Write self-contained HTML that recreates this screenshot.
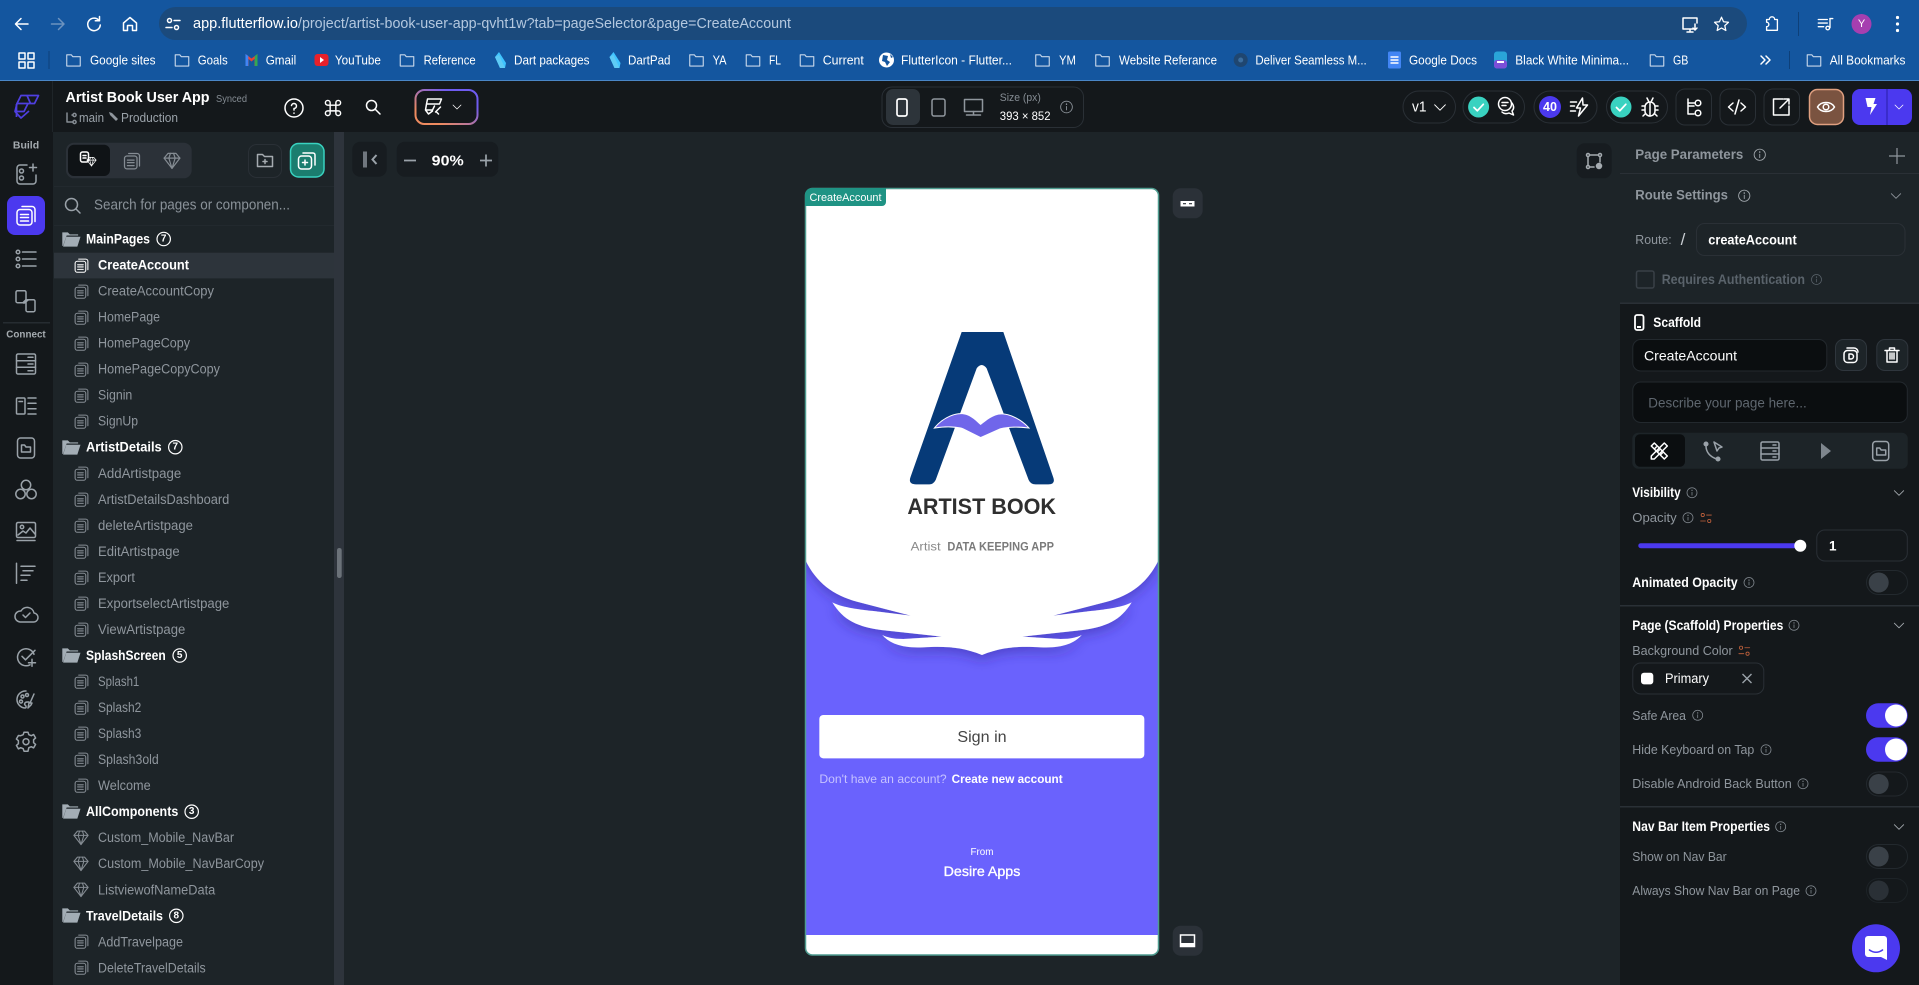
<!DOCTYPE html>
<html lang="en">
<head>
<meta charset="utf-8">
<title>Artist Book User App - FlutterFlow</title>
<style>
html,body{margin:0;padding:0;width:1919px;height:985px;overflow:hidden;background:#1d2428}
svg{display:block;font-family:"Liberation Sans",sans-serif}
text{dominant-baseline:central}
.bm{font-size:13px;fill:#fff}
.it{font-size:13.5px;fill:#8f969d}
.hd{font-size:13.5px;fill:#fff;font-weight:700}
.cn{font-size:10px;fill:#fff;font-weight:700;text-anchor:middle}
.lb{font-size:13px;fill:#8f969d}
.tt{font-size:13.5px;fill:#fff;font-weight:700}
.ic{fill:none;stroke:currentColor;stroke-width:1.5;stroke-linecap:round;stroke-linejoin:round}
.r{color:#9aa2a9}
.w{color:#fff}
.gy{color:#858c93}
.or{color:#c4623c}
</style>
</head>
<body>
<svg width="1919" height="985" viewBox="0 0 1919 985" xmlns="http://www.w3.org/2000/svg">
<defs>
<symbol id="p" viewBox="0 0 24 24"><g class="ic" stroke-width="1.9"><path d="M8 3h10a3 3 0 0 1 3 3v12"/><rect x="3" y="6" width="15" height="15.5" rx="3"/><path d="M6.500 11h8M6.500 14h8M6.500 17.500h8"/></g></symbol>
<symbol id="g" viewBox="0 0 24 24"><g class="ic" stroke-width="1.8"><path d="M7 3h10l5 6-10 13L2 9z"/><path d="M2 9h20M8 9l4 13 4-13M8 9l2-6M16 9l-2-6"/></g></symbol>
<symbol id="fo" viewBox="0 0 24 24"><path fill="#a3adb5" d="M1 3h7l2.500 2.500H21V7H6.500L2 20H1z"/><path fill="#a3adb5" d="M6 8.500h18L20 21H2z"/></symbol>
<symbol id="f" viewBox="0 0 24 24"><path class="ic" d="M3 5h6l2 2.500h10V20H3z"/></symbol>
<symbol id="i" viewBox="0 0 24 24"><g class="ic" stroke-width="1.800"><circle cx="12" cy="12" r="10"/><path d="M12 11v6"/><path d="M12 7v.4" stroke-width="2.400"/></g></symbol>
<symbol id="ch" viewBox="0 0 24 24"><path class="ic" stroke-width="2" d="M4 8l8 8 8-8"/></symbol>
<symbol id="tn" viewBox="0 0 24 24"><g class="ic" stroke-width="2.200"><circle cx="6" cy="6" r="3"/><path d="M13 6h9M2 17h9"/><circle cx="18" cy="17" r="3"/></g></symbol>
<clipPath id="phone"><rect x="806" y="189" width="352" height="765.500" rx="6"/></clipPath>
<filter id="sh" x="-10%" y="-10%" width="120%" height="125%"><feDropShadow dx="0" dy="15" stdDeviation="18" flood-color="#2e2890" flood-opacity=".45"/></filter>
<linearGradient id="gb" x1="0" y1="1" x2="1" y2="0"><stop offset=".2" stop-color="#ee8b60"/><stop offset=".75" stop-color="#6f5cf0"/></linearGradient>
</defs>

<!-- Chrome -->
<rect width="1919" height="81" fill="#14569f"/>
<rect y="80" width="1919" height="1" fill="#4a86c6"/>
<rect x="159" y="7" width="1588" height="33" rx="16.500" fill="#1b4a7c"/>
<g class="ic w" transform="translate(22,24)" stroke-width="1.700"><path d="M6 0H-6M-1-5.500L-6.500 0-1 5.500"/></g>
<g class="ic" style="color:#6d93bf" transform="translate(57.500,24)" stroke-width="1.700"><path d="M-6 0H6M1-5.500L6.500 0 1 5.500"/></g>
<g class="ic w" transform="translate(94,24)" stroke-width="1.700"><path d="M5-3.500A6.300 6.300 0 1 0 6.300 1"/><path d="M5.500-7.500v4.200H1.300"/></g>
<g class="ic w" transform="translate(130,24)" stroke-width="1.500"><path d="M-6.500-1L0-6.500 6.500-1v7.500H2.500V1.500h-5v5h-4z"/></g>
<g class="ic w" transform="translate(173,24)" stroke-width="1.400"><circle cx="-3.500" cy="-3.500" r="2"/><path d="M1-3.500h6M-7 3.500h6"/><circle cx="3.500" cy="3.500" r="2"/></g>
<text x="193" y="24" font-size="14.500" fill="#fff" textLength="105" lengthAdjust="spacingAndGlyphs">app.flutterflow.io</text>
<text x="298" y="24" font-size="14.500" fill="#b4c8df" textLength="493" lengthAdjust="spacingAndGlyphs">/project/artist-book-user-app-qvht1w?tab=pageSelector&amp;page=CreateAccount</text>
<g class="ic w" transform="translate(1690,24)" stroke-width="1.300"><path d="M-7-6H7V-1M3 5H-7V-6M-3 8H3M0 5v3"/><path d="M5 0v6M3 4l2 2 2-2"/></g>
<path class="ic w" transform="translate(1721.500,24) scale(.85)" stroke-width="1.500" d="M0-8l2.400 5.400 5.800.6-4.300 3.900 1.200 5.700L0 4.700l-5.100 2.900 1.200-5.700L-8.200-2l5.800-.6z"/>
<path class="ic w" transform="translate(1772,24) scale(.9)" stroke-width="1.900" d="M-6-5h3a3 3 0 0 1 6 0h3v12H-6V3a2.500 2.500 0 0 0 0-5z"/>
<rect x="1798" y="12" width="1" height="24" fill="#0e4079"/>
<g class="ic w" transform="translate(1825.500,24) scale(.9)" stroke-width="1.600"><path d="M-8-5H2M-8-1H2M-8 3H-2M5-6V4"/><circle cx="2.500" cy="4.500" r="2"/><path d="M5-6h3"/></g>
<circle cx="1861.500" cy="24" r="10" fill="#a63fb0"/><text x="1861.500" y="24" font-size="11" fill="#fff" text-anchor="middle">Y</text>
<g fill="#fff"><circle cx="1897.500" cy="17.500" r="1.600"/><circle cx="1897.500" cy="24" r="1.600"/><circle cx="1897.500" cy="30.500" r="1.600"/></g>

<!-- Bookmarks -->
<g class="ic w" stroke-width="1.500" transform="translate(18,52)"><rect x="1" y="1" width="6" height="6"/><rect x="10" y="1" width="6" height="6"/><rect x="1" y="10" width="6" height="6"/><rect x="10" y="10" width="6" height="6"/></g>
<rect x="48.500" y="51" width="1" height="18" fill="#0e4079"/>
<g style="color:#c7d7ea">
<use href="#f" x="64.500" y="51" width="18" height="18"/><use href="#f" x="173" y="51" width="18" height="18"/><use href="#f" x="398" y="51" width="18" height="18"/><use href="#f" x="687.500" y="51" width="18" height="18"/><use href="#f" x="744" y="51" width="18" height="18"/><use href="#f" x="798" y="51" width="18" height="18"/><use href="#f" x="1033.500" y="51" width="18" height="18"/><use href="#f" x="1093.500" y="51" width="18" height="18"/><use href="#f" x="1648" y="51" width="18" height="18"/><use href="#f" x="1805" y="51" width="18" height="18"/>
</g>
<text class="bm" x="90" y="60" textLength="65.500" lengthAdjust="spacingAndGlyphs">Google sites</text>
<text class="bm" x="197.700" y="60" textLength="30" lengthAdjust="spacingAndGlyphs">Goals</text>
<path d="M245.500 66V54l6 4.500 6-4.500v12h-3v-7l-3 2.500-3-2.500v7z" fill="#ea4335"/><path d="M245.500 66V54l2.800 2v10z" fill="#4285f4"/><path d="M254.700 66V56l2.800-2v12z" fill="#34a853"/>
<text class="bm" x="265.700" y="60" textLength="30.500" lengthAdjust="spacingAndGlyphs">Gmail</text>
<rect x="314.500" y="54" width="14" height="12" rx="3" fill="#e8202a"/><path d="M320 57l4 3-4 3z" fill="#fff"/>
<text class="bm" x="334.900" y="60" textLength="46" lengthAdjust="spacingAndGlyphs">YouTube</text>
<text class="bm" x="423.600" y="60" textLength="52" lengthAdjust="spacingAndGlyphs">Reference</text>
<path d="M499 52l-4 5 5 11h5l1-5z" fill="#40c4ff"/><path d="M495 57l5 11h5l-6-13z" fill="#5fcbf5"/>
<text class="bm" x="514" y="60" textLength="75.500" lengthAdjust="spacingAndGlyphs">Dart packages</text>
<path d="M613.500 52l-4 5 5 11h5l1-5z" fill="#40c4ff"/><path d="M609.500 57l5 11h5l-6-13z" fill="#5fcbf5"/>
<text class="bm" x="628" y="60" textLength="42.500" lengthAdjust="spacingAndGlyphs">DartPad</text>
<text class="bm" x="712.600" y="60" textLength="14" lengthAdjust="spacingAndGlyphs">YA</text>
<text class="bm" x="769" y="60" textLength="12" lengthAdjust="spacingAndGlyphs">FL</text>
<text class="bm" x="822.800" y="60" textLength="41" lengthAdjust="spacingAndGlyphs">Current</text>
<circle cx="886.500" cy="60" r="7.500" fill="#fff"/><path d="M883 55l5 1-1 4 3 2-3 4-2-4-3-1zM890 54l3 3-2 1z" fill="#14569f"/>
<text class="bm" x="901" y="60" textLength="111" lengthAdjust="spacingAndGlyphs">FlutterIcon - Flutter...</text>
<text class="bm" x="1059" y="60" textLength="17" lengthAdjust="spacingAndGlyphs">YM</text>
<text class="bm" x="1119" y="60" textLength="98" lengthAdjust="spacingAndGlyphs">Website Referance</text>
<circle cx="1240.700" cy="60" r="7" fill="#1f4670"/><circle cx="1240.700" cy="60" r="2.500" fill="#3b6d9e"/>
<text class="bm" x="1255.400" y="60" textLength="111.300" lengthAdjust="spacingAndGlyphs">Deliver Seamless M...</text>
<rect x="1388" y="51.500" width="13" height="17" rx="1.500" fill="#4285f4"/><path d="M1390.500 57h8M1390.500 60h8M1390.500 63h8" stroke="#fff" stroke-width="1.500"/>
<text class="bm" x="1409" y="60" textLength="68" lengthAdjust="spacingAndGlyphs">Google Docs</text>
<rect x="1494" y="51.500" width="13" height="17" rx="3" fill="#2aa5d8"/><rect x="1494" y="60" width="13" height="8.500" rx="3" fill="#7b4fd8"/><path d="M1497 62h7" stroke="#fff" stroke-width="2"/>
<text class="bm" x="1515.300" y="60" textLength="113.700" lengthAdjust="spacingAndGlyphs">Black White Minima...</text>
<text class="bm" x="1673" y="60" textLength="15.400" lengthAdjust="spacingAndGlyphs">GB</text>
<path class="ic w" stroke-width="1.400" d="M1761 56l4 4-4 4M1766 56l4 4-4 4"/>
<rect x="1789" y="51" width="1" height="18" fill="#0e4079"/>
<text class="bm" x="1829.700" y="60" textLength="75.800" lengthAdjust="spacingAndGlyphs">All Bookmarks</text>

<!-- Header -->
<rect y="81" width="1919" height="51" fill="#14181b"/>
<rect x="52" y="81" width="1" height="51" fill="#1f2529"/>
<g fill="none" stroke="#4f3fe0" stroke-width="1.700" stroke-linejoin="round">
<path d="M21 95.500h17.500l-4 8H17z"/><path d="M27 95.500l3.500 8M17 103.500l-2 8h9l4-8"/><path d="M15 111.500l6 6.500 8-7"/><path d="M16.500 104v13"/>
</g>
<text x="65.500" y="98" font-size="14.500" font-weight="700" fill="#fff" textLength="144" lengthAdjust="spacingAndGlyphs">Artist Book User App</text>
<text x="216" y="99" font-size="10.500" fill="#858c93" textLength="31" lengthAdjust="spacingAndGlyphs">Synced</text>
<g class="ic gy" stroke-width="1.200" transform="translate(66,112)"><path d="M1 1v9h5M6 3h1M6 10h1"/><circle cx="8.500" cy="3" r="1.600"/><circle cx="8.500" cy="10" r="1.600"/></g>
<text x="79" y="118" font-size="12.500" fill="#9aa2a9" textLength="25" lengthAdjust="spacingAndGlyphs">main</text>
<path d="M109 112l3 1 6 6-2 2-6-6z" fill="#8f969d"/>
<text x="121" y="118" font-size="12.500" fill="#9aa2a9" textLength="57" lengthAdjust="spacingAndGlyphs">Production</text>
<g class="ic w" stroke-width="1.700" transform="translate(294,108)"><circle r="9"/><path d="M-2.500-2.500A2.500 2.500 0 1 1 0 .5V2M0 5v.2"/></g>
<path class="ic w" stroke-width="1.700" transform="translate(333,108) scale(.95)" d="M-3-3h6v6h-6zM-3-3h-2.500a2.500 2.500 0 1 1 2.500-2.500zM3-3v-2.500a2.500 2.500 0 1 1 2.500 2.500zM3 3h2.500a2.500 2.500 0 1 1-2.500 2.500zM-3 3v2.500a2.500 2.500 0 1 1-2.500-2.500z"/>
<g class="ic w" stroke-width="2" transform="translate(373,107)"><circle cx="-1.500" cy="-1.500" r="5"/><path d="M2 2l5 5"/></g>
<rect x="415.500" y="90" width="62" height="34" rx="9" fill="#14181b" stroke="url(#gb)" stroke-width="2"/>
<g class="ic w" stroke-width="1.400" transform="translate(433.500,107)"><path d="M-6-8H8L6-3H-7zM-7-3l-1 6h7l2-4M-8 3l3 4 4-3"/><path d="M2 5l5-5M5 7l-2-2"/></g>
<use href="#ch" class="w" x="451" y="101" width="12" height="12"/>

<rect x="882" y="87" width="201.500" height="40.500" rx="10" fill="#14181b" stroke="#2a3036"/>
<rect x="886" y="89" width="34" height="36" rx="7" fill="#2d343a"/>
<rect x="897" y="99" width="10" height="17" rx="2" fill="none" stroke="#fff" stroke-width="1.700"/>
<rect x="932" y="99" width="13" height="17" rx="2" fill="none" stroke="#8f969d" stroke-width="1.500"/>
<g class="ic" style="color:#8f969d" transform="translate(973.500,107)"><rect x="-9" y="-7.500" width="18" height="12"/><path d="M-7 8H7M0 4.500V8"/></g>
<text x="999.800" y="98" font-size="11" fill="#858c93" textLength="41" lengthAdjust="spacingAndGlyphs">Size (px)</text>
<text x="999.800" y="116" font-size="12" fill="#fff" textLength="50.700" lengthAdjust="spacingAndGlyphs">393 × 852</text>
<use href="#i" style="color:#8f969d" x="1059.500" y="100" width="14" height="14"/>

<g fill="#14181b" stroke="#2a3036">
<rect x="1403" y="91" width="52.500" height="32" rx="16"/>
<rect x="1463" y="91" width="61.500" height="32" rx="16"/>
<rect x="1534" y="91" width="63" height="32" rx="16"/>
<rect x="1606.500" y="91" width="61" height="32" rx="16"/>
<rect x="1676" y="89" width="35.500" height="36" rx="9"/>
<rect x="1720" y="89" width="35.500" height="36" rx="9"/>
<rect x="1764" y="89" width="35.500" height="36" rx="9"/>
</g>
<text x="1412" y="107" font-size="15" fill="#fff" textLength="14.500" lengthAdjust="spacingAndGlyphs">v1</text>
<use href="#ch" class="w" x="1432" y="99.500" width="16" height="16"/>
<circle cx="1478.600" cy="107" r="10.500" fill="#39d2c0"/><path d="M1474 107.500l3.300 3.300 6-6.500" fill="none" stroke="#fff" stroke-width="1.800" stroke-linecap="round" stroke-linejoin="round"/>
<g class="ic w" transform="translate(1506,106)" stroke-width="1.400"><circle cx="-1" cy="-2" r="6.500"/><path d="M-4-3.500h6M-4-.5h4"/><path d="M6-3c2 3 2 6 0 8l1.500 4-4.500-2c-2 1-5 1-7-1"/></g>
<circle cx="1550" cy="107" r="11" fill="#4b39ef"/><text x="1550" y="107" font-size="12.500" font-weight="700" fill="#fff" text-anchor="middle">40</text>
<g class="ic w" transform="translate(1579.500,107)" stroke-width="1.500"><path d="M3-9L-3 1h4l-2 8L8-2H3.500z"/><path d="M-9-5h6M-9-1h4M-9 4h5"/></g>
<circle cx="1621" cy="107" r="10.500" fill="#39d2c0"/><path d="M1616.500 107.500l3.300 3.300 6-6.500" fill="none" stroke="#fff" stroke-width="1.800" stroke-linecap="round" stroke-linejoin="round"/>
<g class="ic w" transform="translate(1650,107)" stroke-width="1.300"><rect x="-5" y="-5" width="10" height="14" rx="5"/><path d="M0-5V9M-3-9l1.500 3M3-9L1.500-6M-5-1h-3M5-1h3M-5 3H-8M5 3h3M-5 7l-2 2M5 7l2 2"/></g>
<g class="ic w" transform="translate(1694,107)" stroke-width="1.500"><path d="M-6-8V7h6M-6-1H0"/><circle cx="4" cy="-4" r="2.800"/><circle cx="4" cy="6" r="2.800"/><path d="M-6-4H1"/></g>
<g class="ic w" transform="translate(1737,107)" stroke-width="1.500"><path d="M-4-4l-4.500 4L-4 4M4-4l4.500 4L4 4M2-7l-4 14"/></g>
<g class="ic w" transform="translate(1781,107)" stroke-width="1.800"><path d="M2-8H-7.500V8H8V-1"/><path d="M-1 1L7-7M3-8h5v5"/></g>
<rect x="1809.500" y="89.500" width="34" height="35" rx="8" fill="#7a5340" stroke="#e0a080" stroke-width="1.500"/>
<g class="ic w" transform="translate(1826,107)" stroke-width="1.700"><path d="M-8.500 0C-5-6 5-6 8.500 0 5 6-5 6-8.500 0z"/><circle r="2.800"/></g>
<rect x="1852" y="89" width="60" height="36" rx="8" fill="#4b39ef"/>
<rect x="1886.500" y="89" width="1" height="36" fill="#2a1fa8"/>
<path d="M1866 98h10l-2 6h3.500l-7 11 1.500-8h-4z" fill="#fff" transform="translate(-.5,0)"/>
<use href="#ch" class="w" x="1893" y="101" width="12" height="12"/>

<!-- Left rail -->
<rect y="132" width="53" height="853" fill="#14181b"/>
<text x="26" y="145.700" font-size="10.500" font-weight="700" fill="#a5abb0" text-anchor="middle">Build</text>
<g class="ic r" stroke-width="1.400" transform="translate(26,174)"><path d="M1-9H-6a3 3 0 0 0-3 3V7a3 3 0 0 0 3 3H7a3 3 0 0 0 3-3V1"/><circle cx="-4.500" cy="-3" r="2"/><circle cx="-4.500" cy="4" r="2"/><path d="M7-10V-3M3.500-6.500h7"/></g>
<rect x="7" y="196" width="38" height="39" rx="8" fill="#4b39ef"/>
<use href="#p" class="w" x="14" y="203.500" width="24" height="24"/>
<g class="ic r" stroke-width="1.400" transform="translate(26,259)"><circle cx="-8" cy="-7" r="1.800"/><circle cx="-8" cy="0" r="1.800"/><circle cx="-8" cy="7" r="1.800"/><path d="M-3.500-7H10M-3.500 0H10M-3.500 7H10"/></g>
<g class="ic r" stroke-width="1.300" transform="translate(26,300.700)"><rect x="-10" y="-10" width="10" height="12" rx="1.500"/><rect x="0" y="-1" width="9" height="12" rx="1.500"/><path d="M-3 2L0-1"/><path d="M-2 2.500L2-.5"/></g>
<rect x="3" y="322" width="47" height="1.500" fill="#262c31"/>
<text x="26" y="334.300" font-size="10.500" font-weight="700" fill="#a5abb0" text-anchor="middle" textLength="39.400" lengthAdjust="spacingAndGlyphs">Connect</text>
<g class="ic r" stroke-width="1.400" transform="translate(26,364)"><rect x="-9.500" y="-10" width="19" height="20" rx="1.500"/><path d="M-9.500-3.300H9.500M-9.500 3.300H9.500M2-6.700h5M2 0h5M2 6.700h5"/></g>
<g class="ic r" stroke-width="1.400" transform="translate(26,406)"><rect x="-9.500" y="-8" width="8.500" height="16" rx="1"/><path d="M-7-4.500h3.500M2-8H10M2-2.700H10M2 2.700H10M2 8H10"/></g>
<g class="ic r" stroke-width="1.400" transform="translate(26,448)"><rect x="-8.500" y="-10" width="17" height="20" rx="3"/><path d="M-4.500-3h3l1.500 2h4.500v5h-9z"/></g>
<g class="ic r" stroke-width="1.400" transform="translate(26,490)"><circle cy="-5" r="4.700"/><circle cx="-5.500" cy="4" r="4.700"/><circle cx="5.500" cy="4" r="4.700"/></g>
<g class="ic r" stroke-width="1.400" transform="translate(26,531)"><rect x="-9.500" y="-8.500" width="19" height="15" rx="1.500"/><circle cx="-4" cy="-4" r="1.700"/><path d="M-8 4l5-4 3 2 4-5 5 6M-9 9.500H9"/></g>
<g class="ic r" stroke-width="1.400" transform="translate(26,573.300)"><path d="M-9.500-10V10M-5-7H9M-3-2.500H7M-5 2H4M-5 7H1"/></g>
<g class="ic r" stroke-width="1.400" transform="translate(26,615)"><path d="M-6 7h13a4.500 4.500 0 0 0 1-9A7 7 0 0 0-5-4 5.500 5.500 0 0 0-6 7z"/><path d="M-3 0l2.500 2.500L4-2"/></g>
<g class="ic r" stroke-width="1.400" transform="translate(26,657.300)"><path d="M4 7.500A8.500 8.500 0 1 1 8-3"/><path d="M-4-1l3.500 3.500L9-7M6 2v7M2.500 5.500h7"/></g>
<g class="ic r" stroke-width="1.400" transform="translate(26,700)"><path d="M0-9A8.500 8.500 0 1 0-1 8c1.500 0 1.500-2 0-3-1-1 0-3 2-3h2"/><circle cx="-3.500" cy="-3.500" r="1.500"/><circle cx="-5" cy="1.500" r="1.500"/><circle cx="1" cy="-5" r="1.500"/><path d="M8-6L4 3M3 3L2 8l3-3 1-2z"/></g>
<g class="ic r" stroke-width="1.400" transform="translate(26,741.700)"><circle r="3"/><path d="M-2-9.500h4l.8 2.500 2.500 1 2.300-1.200 2 3.500-2 1.700v3l2 1.700-2 3.500-2.300-1.200-2.500 1L2 9.500h-4l-.8-2.500-2.500-1-2.300 1.200-2-3.500 2-1.700v-3l-2-1.700 2-3.500L-5.300-6l2.500-1z"/></g>

<!-- Pages panel -->
<rect x="53" y="132" width="281" height="853" fill="#1d2428"/>
<rect x="334" y="132" width="10" height="853" fill="#2e343c"/>
<rect x="337" y="548" width="4.700" height="30" rx="2.300" fill="#6b7279"/>
<rect x="66" y="142.700" width="125.700" height="35.600" rx="8" fill="#2b3138"/>
<rect x="68" y="144.700" width="42" height="31.300" rx="6" fill="#0f1316"/>
<g class="ic w" transform="translate(85,160)" stroke-width="1.200"><rect x="-4.500" y="-8" width="8" height="10" rx="2"/><path d="M-2-4.500h3M-2-2h3"/></g>
<use href="#g" class="w" x="86" y="156" width="11" height="11"/>
<use href="#p" class="gy" x="122" y="151" width="20" height="20"/>
<use href="#g" class="gy" x="162.500" y="151" width="19" height="19"/>
<rect x="248.500" y="144.500" width="33" height="33" rx="8" fill="#1d2428" stroke="#2a3036"/>
<path class="ic gy" d="M258 155h5l2 2h8v10h-15zM265.500 160v4M263.500 162h4" transform="translate(-.5,-.5)" style="color:#a5abb0"/>
<rect x="290.500" y="143.500" width="33.500" height="33.500" rx="8" fill="#1b7d6f" stroke="#39d2c0" stroke-width="1.500"/>
<g class="ic w" transform="translate(307,161)" stroke-width="1.500"><path d="M-4-8H6a2 2 0 0 1 2 2V4"/><rect x="-8.500" y="-5" width="13" height="13" rx="3"/><path d="M-2-1v5M-4.500 1.500h5"/></g>
<g class="ic" style="color:#9aa2a9" transform="translate(73,206)" stroke-width="1.500"><circle cx="-1.500" cy="-1.500" r="6"/><path d="M3 3l4 4"/></g>
<text x="94" y="205.500" font-size="14.500" fill="#8a9299" textLength="196" lengthAdjust="spacingAndGlyphs">Search for pages or componen...</text>
<rect x="54" y="186" width="280" height="1" fill="#22292e"/><rect x="54" y="225" width="280" height="1" fill="#22292e"/>
<rect x="54" y="252.700" width="280" height="25.700" fill="#2d343b"/>

<!-- Headers -->
<use href="#fo" x="61.500" y="230" width="19" height="19"/>
<text class="hd" x="86" y="239" textLength="64" lengthAdjust="spacingAndGlyphs">MainPages</text>
<circle cx="163.700" cy="239" r="6.700" fill="none" stroke="#fff" stroke-width="1.200"/><text class="cn" x="163.700" y="239">7</text>
<use href="#fo" x="61.500" y="438" width="19" height="19"/>
<text class="hd" x="86" y="447.200" textLength="75.700" lengthAdjust="spacingAndGlyphs">ArtistDetails</text>
<circle cx="175.300" cy="447.200" r="6.700" fill="none" stroke="#fff" stroke-width="1.200"/><text class="cn" x="175.300" y="447.200">7</text>
<use href="#fo" x="61.500" y="646" width="19" height="19"/>
<text class="hd" x="86" y="655.500" textLength="79.700" lengthAdjust="spacingAndGlyphs">SplashScreen</text>
<circle cx="179.700" cy="655.500" r="6.700" fill="none" stroke="#fff" stroke-width="1.200"/><text class="cn" x="179.700" y="655.500">5</text>
<use href="#fo" x="61.500" y="802" width="19" height="19"/>
<text class="hd" x="86" y="811.700" textLength="92.300" lengthAdjust="spacingAndGlyphs">AllComponents</text>
<circle cx="191.700" cy="811.700" r="6.700" fill="none" stroke="#fff" stroke-width="1.200"/><text class="cn" x="191.700" y="811.700">3</text>
<use href="#fo" x="61.500" y="906" width="19" height="19"/>
<text class="hd" x="86" y="915.800" textLength="77" lengthAdjust="spacingAndGlyphs">TravelDetails</text>
<circle cx="176.300" cy="915.800" r="6.700" fill="none" stroke="#fff" stroke-width="1.200"/><text class="cn" x="176.300" y="915.800">8</text>

<!-- Items -->
<use href="#p" class="w" x="73" y="257" width="17" height="17"/>
<text x="98" y="265" font-size="13.500" font-weight="700" fill="#fff" textLength="91" lengthAdjust="spacingAndGlyphs">CreateAccount</text>
<g class="gy">
<use href="#p" x="73" y="283" width="17" height="17"/><use href="#p" x="73" y="309" width="17" height="17"/><use href="#p" x="73" y="335" width="17" height="17"/><use href="#p" x="73" y="361" width="17" height="17"/><use href="#p" x="73" y="387" width="17" height="17"/><use href="#p" x="73" y="413" width="17" height="17"/>
<use href="#p" x="73" y="465" width="17" height="17"/><use href="#p" x="73" y="491" width="17" height="17"/><use href="#p" x="73" y="517" width="17" height="17"/><use href="#p" x="73" y="543" width="17" height="17"/><use href="#p" x="73" y="569" width="17" height="17"/><use href="#p" x="73" y="595" width="17" height="17"/><use href="#p" x="73" y="621" width="17" height="17"/>
<use href="#p" x="73" y="673" width="17" height="17"/><use href="#p" x="73" y="699" width="17" height="17"/><use href="#p" x="73" y="725" width="17" height="17"/><use href="#p" x="73" y="751" width="17" height="17"/><use href="#p" x="73" y="777" width="17" height="17"/>
<use href="#g" x="72.500" y="829" width="17" height="17"/><use href="#g" x="72.500" y="855" width="17" height="17"/><use href="#g" x="72.500" y="881" width="17" height="17"/>
<use href="#p" x="73" y="933" width="17" height="17"/><use href="#p" x="73" y="959" width="17" height="17"/>
</g>
<text class="it" x="98" y="291.100" textLength="116" lengthAdjust="spacingAndGlyphs">CreateAccountCopy</text>
<text class="it" x="98" y="317.100" textLength="62" lengthAdjust="spacingAndGlyphs">HomePage</text>
<text class="it" x="98" y="343.100" textLength="92" lengthAdjust="spacingAndGlyphs">HomePageCopy</text>
<text class="it" x="98" y="369.200" textLength="122" lengthAdjust="spacingAndGlyphs">HomePageCopyCopy</text>
<text class="it" x="98" y="395.200" textLength="34.300" lengthAdjust="spacingAndGlyphs">Signin</text>
<text class="it" x="98" y="421.200" textLength="40" lengthAdjust="spacingAndGlyphs">SignUp</text>
<text class="it" x="98" y="473.300" textLength="83.300" lengthAdjust="spacingAndGlyphs">AddArtistpage</text>
<text class="it" x="98" y="499.300" textLength="131.300" lengthAdjust="spacingAndGlyphs">ArtistDetailsDashboard</text>
<text class="it" x="98" y="525.300" textLength="95" lengthAdjust="spacingAndGlyphs">deleteArtistpage</text>
<text class="it" x="98" y="551.400" textLength="81.700" lengthAdjust="spacingAndGlyphs">EditArtistpage</text>
<text class="it" x="98" y="577.400" textLength="37" lengthAdjust="spacingAndGlyphs">Export</text>
<text class="it" x="98" y="603.400" textLength="131.300" lengthAdjust="spacingAndGlyphs">ExportselectArtistpage</text>
<text class="it" x="98" y="629.500" textLength="87.300" lengthAdjust="spacingAndGlyphs">ViewArtistpage</text>
<text class="it" x="98" y="681.500" textLength="41.300" lengthAdjust="spacingAndGlyphs">Splash1</text>
<text class="it" x="98" y="707.500" textLength="43.300" lengthAdjust="spacingAndGlyphs">Splash2</text>
<text class="it" x="98" y="733.600" textLength="43.300" lengthAdjust="spacingAndGlyphs">Splash3</text>
<text class="it" x="98" y="759.600" textLength="60.700" lengthAdjust="spacingAndGlyphs">Splash3old</text>
<text class="it" x="98" y="785.600" textLength="52.700" lengthAdjust="spacingAndGlyphs">Welcome</text>
<text class="it" x="98" y="837.700" textLength="136" lengthAdjust="spacingAndGlyphs">Custom_Mobile_NavBar</text>
<text class="it" x="98" y="863.700" textLength="166" lengthAdjust="spacingAndGlyphs">Custom_Mobile_NavBarCopy</text>
<text class="it" x="98" y="889.800" textLength="117.300" lengthAdjust="spacingAndGlyphs">ListviewofNameData</text>
<text class="it" x="98" y="941.800" textLength="85" lengthAdjust="spacingAndGlyphs">AddTravelpage</text>
<text class="it" x="98" y="967.800" textLength="107.700" lengthAdjust="spacingAndGlyphs">DeleteTravelDetails</text>

<!-- Canvas controls -->
<rect x="352.300" y="141.700" width="34.400" height="35" rx="8" fill="#171c20"/>
<rect x="363" y="151.500" width="4" height="16" fill="#70777e"/>
<path d="M376.500 155l-4 4.500 4 4.500" fill="none" stroke="#9aa2a9" stroke-width="2"/>
<rect x="396.700" y="141.700" width="101.600" height="35" rx="8" fill="#171c20"/>
<path d="M404 160.500h12M480 160.500h12M486 154.500v12" stroke="#9aa2a9" stroke-width="1.700"/>
<text x="431.700" y="161" font-size="15" font-weight="700" fill="#fff" textLength="32" lengthAdjust="spacingAndGlyphs">90%</text>
<rect x="1576.700" y="143.300" width="35" height="35" rx="8" fill="#171c20"/>
<g class="ic" style="color:#a5abb0" transform="translate(1594,161)" stroke-width="1.200"><path d="M-4-6H4M-6-4V4M-4 6H0M6-4V1"/><circle cx="-6" cy="-6" r="1.500"/><circle cx="6" cy="-6" r="1.500"/><circle cx="-6" cy="6" r="1.500"/><circle cx="5" cy="5" r="2.500" fill="currentColor"/></g>

<!-- Phone -->
<g clip-path="url(#phone)">
<rect x="805" y="188" width="354" height="768" fill="#fff"/>
<rect x="805" y="555" width="354" height="380" fill="#6a62fd"/>
<g transform="translate(790,180) scale(.33333)">
<path filter="url(#sh)" fill="#fff" d="M30,-20 L30,1110 L46,1140 C80,1210 130,1245 200,1265 L362,1307 L250,1293 C200,1288 150,1280 127,1267 C160,1320 200,1342 290,1352 L455,1370 L340,1377 C310,1377 290,1372 277,1365 C300,1392 340,1405 400,1402 C470,1398 520,1402 576,1425 C632,1402 682,1398 752,1402 C812,1405 852,1392 875,1365 C862,1372 842,1377 812,1377 L697,1370 L862,1352 C952,1342 992,1320 1025,1267 C1002,1280 952,1288 902,1293 L790,1307 L952,1265 C1022,1245 1072,1210 1106,1140 L1122,1110 L1122,-20 Z"/>
<path fill="#063a78" d="M515,456 L640,456 L790,893 Q797,913 775,913 L737,913 Q722,913 716,900 L590,565 Q575,545 560,565 L437,900 Q430,913 418,913 L378,913 Q353,913 362,890 Z"/>
<path fill="#fff" stroke="#fff" stroke-width="6" d="M437,742 C460,715 500,695 530,705 C550,712 565,730 572,735 C582,728 600,710 625,704 C655,698 695,722 713,742 C680,738 650,740 630,745 L572,771 L520,745 C500,738 465,738 437,742 Z"/>
<path fill="#7066ea" d="M437,742 C460,715 500,695 530,705 C550,712 565,730 572,735 C582,728 600,710 625,704 C655,698 695,722 713,742 C680,738 650,740 630,745 L572,771 L520,745 C500,738 465,738 437,742 Z"/>
<text x="352" y="980" font-size="66" font-weight="700" fill="#2f2f2f" textLength="446" lengthAdjust="spacingAndGlyphs">ARTIST BOOK</text>
<text x="362" y="1100" font-size="36" fill="#8a8a8a" textLength="90" lengthAdjust="spacingAndGlyphs">Artist</text>
<text x="472" y="1100" font-size="36" font-weight="700" fill="#7a7a7a" textLength="320" lengthAdjust="spacingAndGlyphs">DATA KEEPING APP</text>
<rect x="88" y="1605" width="975" height="130" rx="12" fill="#fff"/>
<text x="576" y="1672" font-size="48" fill="#444" text-anchor="middle" textLength="148" lengthAdjust="spacingAndGlyphs">Sign in</text>
<text x="88" y="1798" font-size="35" fill="#c6c2ff" textLength="382" lengthAdjust="spacingAndGlyphs">Don't have an account?</text>
<text x="485" y="1798" font-size="35" font-weight="700" fill="#fff" textLength="333" lengthAdjust="spacingAndGlyphs">Create new account</text>
<text x="576" y="2017" font-size="30" fill="#fff" text-anchor="middle" textLength="69" lengthAdjust="spacingAndGlyphs">From</text>
<text x="576" y="2075" font-size="41" fill="#fff" stroke="#fff" stroke-width="1" text-anchor="middle" textLength="230" lengthAdjust="spacingAndGlyphs">Desire Apps</text>
</g>
</g>
<rect x="805.500" y="188.500" width="353" height="766.500" rx="7" fill="none" stroke="#4f9c90" stroke-width="1.500"/>
<path d="M805 195a7 7 0 0 1 7-7h74v14a4 4 0 0 1-4 4h-77z" fill="#1f9384"/>
<text x="809.500" y="198" font-size="11" fill="#fff" textLength="72" lengthAdjust="spacingAndGlyphs">CreateAccount</text>
<rect x="1172.700" y="188.300" width="30" height="30" rx="8" fill="#2b3138"/>
<rect x="1180.500" y="201" width="14" height="5.500" fill="#fff"/><path d="M1183 203.700h3M1189 203.700h3" stroke="#2b3138" stroke-width="1.200"/>
<rect x="1172.700" y="925.700" width="30" height="30" rx="8" fill="#2b3138"/>
<rect x="1180.500" y="935" width="14" height="11.500" fill="none" stroke="#fff" stroke-width="1.500"/><rect x="1180.500" y="943" width="14" height="3.500" fill="#fff"/>

<!-- Right panel -->
<rect x="1620" y="303" width="299" height="682" fill="#14181b"/>
<rect x="1620" y="302.500" width="299" height="1.500" fill="#2a3036"/>
<rect x="1620" y="173" width="299" height="1" fill="#2a3036"/>
<text class="tt" style="fill:#8f969d" x="1635.300" y="154.300" textLength="108" lengthAdjust="spacingAndGlyphs">Page Parameters</text>
<use href="#i" style="color:#a5abb0" x="1753" y="148" width="13.500" height="13.500"/>
<path d="M1889 156h16M1897 148v16" stroke="#8f969d" stroke-width="1.200"/>
<text class="tt" style="fill:#8f969d" x="1635.300" y="195" textLength="92.700" lengthAdjust="spacingAndGlyphs">Route Settings</text>
<use href="#i" style="color:#a5abb0" x="1737.500" y="189" width="13.500" height="13.500"/>
<use href="#ch" style="color:#8f969d" x="1889" y="189" width="14" height="14"/>
<text class="lb" x="1635.300" y="239.300" textLength="36.400" lengthAdjust="spacingAndGlyphs">Route:</text>
<text x="1683" y="239.300" font-size="17" fill="#c9ced3" text-anchor="middle">/</text>
<rect x="1696.500" y="223.500" width="208.500" height="32" rx="8" fill="none" stroke="#2a3036"/>
<text class="tt" x="1708.300" y="240" textLength="88.400" lengthAdjust="spacingAndGlyphs">createAccount</text>
<rect x="1636.500" y="271" width="17.500" height="17" rx="2" fill="none" stroke="#394047" stroke-width="1.500"/>
<text class="tt" style="fill:#5a636b" x="1661.700" y="279.300" textLength="143.300" lengthAdjust="spacingAndGlyphs">Requires Authentication</text>
<use href="#i" style="color:#5a636b" x="1810.500" y="273.500" width="12" height="12"/>
<rect x="1635" y="315" width="8.500" height="15" rx="2" fill="none" stroke="#fff" stroke-width="1.800"/><rect x="1637" y="326" width="4" height="2" fill="#fff"/>
<text class="tt" x="1653.300" y="322.300" textLength="47.700" lengthAdjust="spacingAndGlyphs">Scaffold</text>
<rect x="1632.800" y="339.500" width="194" height="31.500" rx="8" fill="#0b0e10" stroke="#23292e"/>
<text x="1644" y="355.300" font-size="14" fill="#fff" textLength="93" lengthAdjust="spacingAndGlyphs">CreateAccount</text>
<rect x="1835.500" y="339.500" width="31" height="31" rx="8" fill="#1d2428" stroke="#2f363d"/>
<rect x="1876.800" y="339.500" width="31" height="31" rx="8" fill="#1d2428" stroke="#2f363d"/>
<g class="ic w" transform="translate(1851,355)" stroke-width="1.500"><path d="M-4-7H3a4 4 0 0 1 4 4"/><rect x="-7" y="-4.500" width="13" height="12" rx="3.500"/><path d="M-2-1H0a2.500 2.500 0 0 1 0 5h-2z"/></g>
<g class="ic w" transform="translate(1892,355)" stroke-width="1.500"><path d="M-7-4.500H7M-2.500-4.500V-7h5v2.500M-5-4.500V7h10V-4.500M-2-2v6M0-2v6M2-2v6"/></g>
<rect x="1632.800" y="382" width="274.500" height="40.500" rx="8" fill="#0b0e10" stroke="#23292e"/>
<text x="1648.300" y="402.700" font-size="14" fill="#5f676f" textLength="158.400" lengthAdjust="spacingAndGlyphs">Describe your page here...</text>
<rect x="1632.300" y="432.700" width="275.500" height="36" rx="6" fill="#1d2428"/>
<rect x="1635" y="434.300" width="50" height="32.400" rx="5" fill="#0b0e10"/>
<g class="ic w" transform="translate(1659.300,451)" stroke-width="1.700"><path d="M-8-5L-5-8 8 5 5 8zM-5-2l2-2M-2 1l2-2M1 4l2-2"/><path d="M5-8L8-5-5 8-8 8V5z"/></g>
<g class="ic r" transform="translate(1715,451)" stroke-width="1.400"><circle cx="-9" cy="-7" r="1.800" fill="currentColor"/><circle cx="3" cy="8" r="1.800" fill="currentColor"/><path d="M-9-5c0 6 4 11 11 13M-1-9l8 5-3 1-2 3z"/></g>
<g class="ic r" transform="translate(1770,451)" stroke-width="1.400"><rect x="-9" y="-9" width="18" height="18" rx="1.500"/><path d="M-9-3H9M-9 3H9M3-6h3M3 0h3M3 6h3"/></g>
<path d="M1821 443l10 8-10 8z" fill="#7e868d"/>
<g class="ic r" transform="translate(1880.700,451)" stroke-width="1.400"><rect x="-8" y="-9.500" width="16" height="19" rx="3"/><path d="M-4-3h3l1.500 2H5v5h-9z"/></g>
<text class="tt" x="1632.300" y="492.700" textLength="48.400" lengthAdjust="spacingAndGlyphs">Visibility</text>
<use href="#i" class="gy" x="1686" y="486.700" width="12" height="12"/>
<use href="#ch" style="color:#a5abb0" x="1892" y="486" width="14" height="14"/>
<text class="lb" x="1632.300" y="517.700" textLength="44.400" lengthAdjust="spacingAndGlyphs">Opacity</text>
<use href="#i" class="gy" x="1682" y="511.700" width="12" height="12"/>
<use href="#tn" class="or" x="1699.500" y="511.800" width="13" height="13"/>
<rect x="1638.300" y="543.200" width="162" height="5" rx="2.500" fill="#4b39ef"/>
<circle cx="1800.300" cy="545.700" r="6" fill="#fff"/>
<rect x="1816.800" y="530" width="90.500" height="31" rx="8" fill="none" stroke="#2a3036"/>
<text x="1829" y="546" font-size="13.500" font-weight="700" fill="#fff">1</text>
<text class="tt" x="1632.300" y="582.300" textLength="105.400" lengthAdjust="spacingAndGlyphs">Animated Opacity</text>
<use href="#i" class="gy" x="1743" y="576.500" width="12" height="12"/>
<rect x="1866.500" y="570.500" width="41" height="24" rx="12" fill="none" stroke="#23292e"/><circle cx="1878.700" cy="582.500" r="10" fill="#3a4148"/>
<rect x="1620" y="605" width="299" height="1.500" fill="#2a3036"/>
<text class="tt" x="1632.300" y="625.300" textLength="151" lengthAdjust="spacingAndGlyphs">Page (Scaffold) Properties</text>
<use href="#i" class="gy" x="1788" y="619.300" width="12" height="12"/>
<use href="#ch" style="color:#a5abb0" x="1892" y="618.500" width="14" height="14"/>
<text class="lb" x="1632.300" y="650.700" textLength="100.400" lengthAdjust="spacingAndGlyphs">Background Color</text>
<use href="#tn" class="or" x="1737.800" y="644.500" width="13" height="13"/>
<rect x="1632.800" y="663" width="131" height="31" rx="8" fill="none" stroke="#2a3036"/>
<rect x="1641" y="672.700" width="12.300" height="11.700" rx="3" fill="#fff"/>
<text x="1665" y="678.700" font-size="13.500" fill="#fff" textLength="44" lengthAdjust="spacingAndGlyphs">Primary</text>
<path d="M1742.500 674l9 9M1751.500 674l-9 9" stroke="#9aa2a9" stroke-width="1.400"/>
<text class="lb" x="1632.300" y="715.300" textLength="53.700" lengthAdjust="spacingAndGlyphs">Safe Area</text>
<use href="#i" class="gy" x="1691.700" y="709.300" width="12" height="12"/>
<rect x="1866" y="703.300" width="41.700" height="24.400" rx="12.200" fill="#4b39ef"/><circle cx="1896" cy="715.500" r="11" fill="#fff"/>
<text class="lb" x="1632.300" y="749.700" textLength="122" lengthAdjust="spacingAndGlyphs">Hide Keyboard on Tap</text>
<use href="#i" class="gy" x="1760" y="743.700" width="12" height="12"/>
<rect x="1866" y="737.300" width="41.700" height="24.400" rx="12.200" fill="#4b39ef"/><circle cx="1896" cy="749.500" r="11" fill="#fff"/>
<text class="lb" x="1632.300" y="783.700" textLength="159.400" lengthAdjust="spacingAndGlyphs">Disable Android Back Button</text>
<use href="#i" class="gy" x="1797" y="777.700" width="12" height="12"/>
<rect x="1866.500" y="772" width="41" height="24" rx="12" fill="none" stroke="#23292e"/><circle cx="1878.700" cy="784" r="10" fill="#3a4148"/>
<rect x="1620" y="806" width="299" height="1.500" fill="#2a3036"/>
<text class="tt" x="1632.300" y="826.700" textLength="137.700" lengthAdjust="spacingAndGlyphs">Nav Bar Item Properties</text>
<use href="#i" class="gy" x="1774.700" y="820.700" width="12" height="12"/>
<use href="#ch" style="color:#a5abb0" x="1892" y="820" width="14" height="14"/>
<text class="lb" x="1632.300" y="856.700" textLength="94.400" lengthAdjust="spacingAndGlyphs">Show on Nav Bar</text>
<rect x="1866.500" y="844.500" width="41" height="24" rx="12" fill="none" stroke="#23292e"/><circle cx="1878.700" cy="856.500" r="10" fill="#3a4148"/>
<text class="lb" x="1632.300" y="890.700" textLength="167.700" lengthAdjust="spacingAndGlyphs">Always Show Nav Bar on Page</text>
<use href="#i" class="gy" x="1805" y="884.700" width="12" height="12"/>
<rect x="1866.500" y="878.500" width="41" height="24" rx="12" fill="none" stroke="#1d2327"/><circle cx="1878.700" cy="890.500" r="10" fill="#2a3036"/>
<circle cx="1876" cy="948.300" r="24" fill="#4b39ef"/>
<path d="M1868 936h16a3 3 0 0 1 3 3v21l-6-3h-13a3 3 0 0 1-3-3v-15a3 3 0 0 1 3-3z" fill="#fff"/>
<path d="M1869.500 950c4 3 9 3 13 0" fill="none" stroke="#4b39ef" stroke-width="1.600" stroke-linecap="round"/>
</svg>
</body>
</html>
